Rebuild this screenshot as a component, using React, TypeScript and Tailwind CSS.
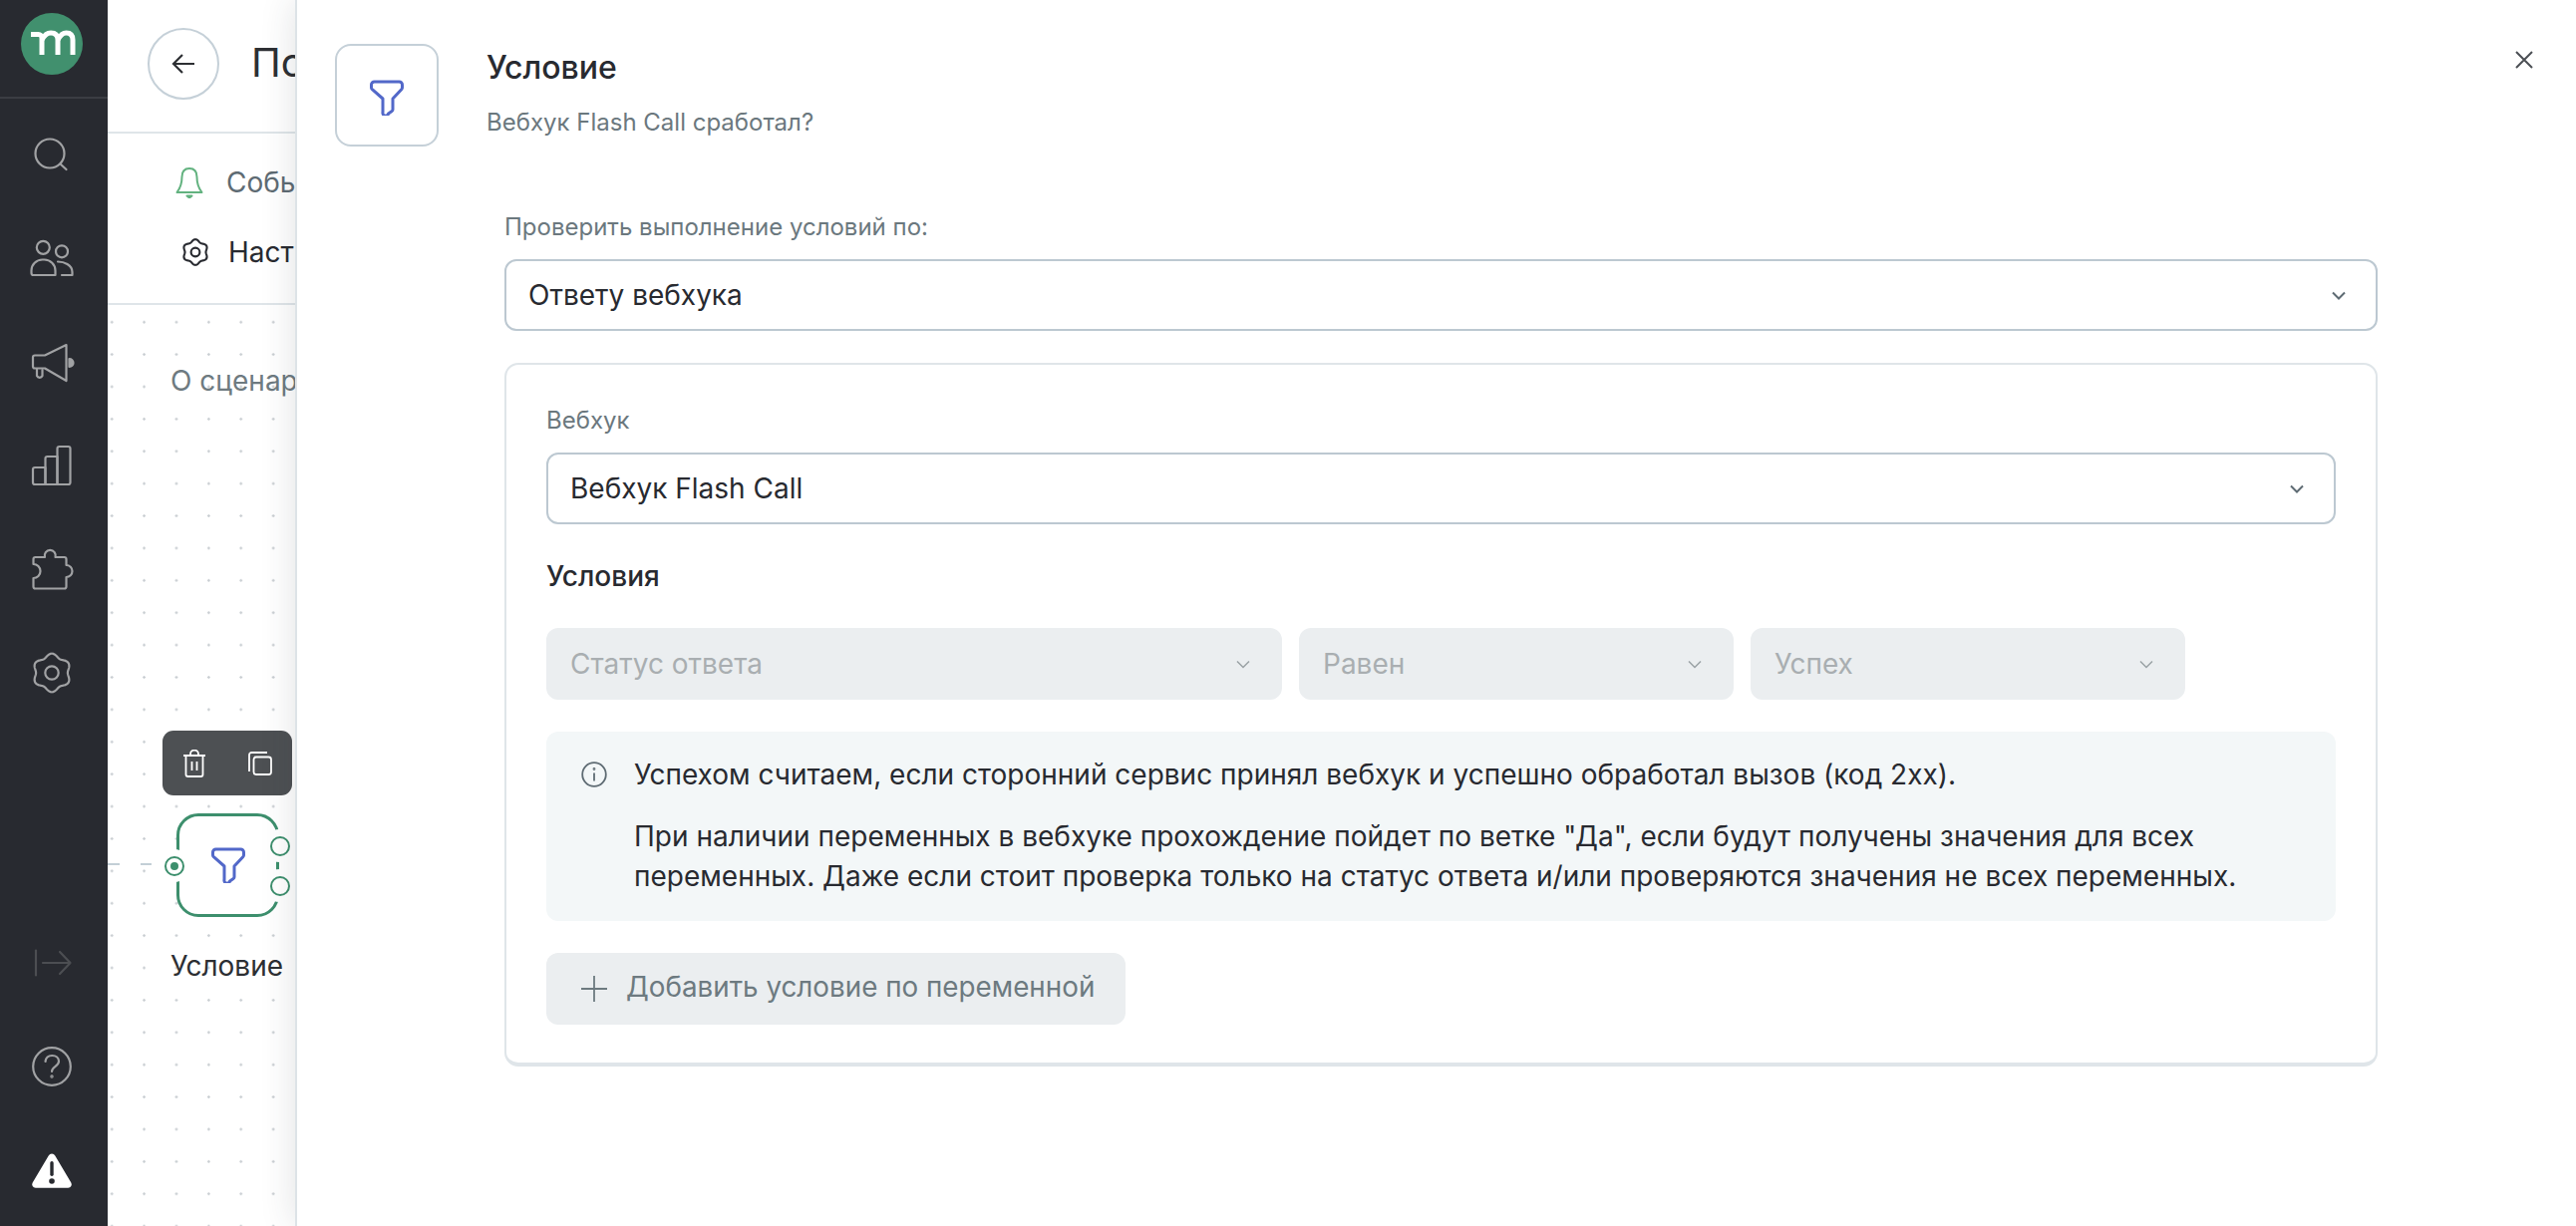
// rounded six-lobed gear outline used by the sidebar and the tab row
function gearPath(cx: number, cy: number, base: number, amp: number) {
  const pts: string[] = [];
  for (let i = 0; i < 180; i++) {
    const t = (i / 180) * Math.PI * 2;
    const r = base + amp * Math.cos(6 * t);
    pts.push(`${(cx + r * Math.sin(t)).toFixed(2)} ${(cy - r * Math.cos(t)).toFixed(2)}`);
  }
  return `M${pts.join('L')}Z`;
}

function FilterIcon({ className = '' }: { className?: string }) {
  return (
    <svg className={className} width="36" height="36" viewBox="0 0 36 36" fill="none" stroke="#5268c9" strokeWidth="3" strokeLinejoin="round">
      <path d="M2.500 5a3 3 0 0 1 3-3h25a3 3 0 0 1 3 3v3a2 2 0 0 1-.6 1.400L24 19v11a2 2 0 0 1-.9 1.600l-3.500 2.400A2 2 0 0 1 14 32.500V19L3.100 9.400A2 2 0 0 1 2.500 8z" />
    </svg>
  );
}

function Chevron({ color = '#5e6b73', thin = false }: { color?: string; thin?: boolean }) {
  return (
    <svg className="shrink-0" width="14" height="9" viewBox="0 0 14 9" fill="none" stroke={color} strokeWidth={thin ? 1.500 : 2}>
      <path d="M1 1.500 7 7.500l6-6" />
    </svg>
  );
}

function NavIcon({ children, stroke = '#a1a2a4' }: { children: React.ReactNode; stroke?: string }) {
  return (
    <div className="flex h-[104px] items-center justify-center">
      <svg width="48" height="48" viewBox="0 0 48 48" fill="none" stroke={stroke} strokeWidth="2.200" strokeLinecap="round" strokeLinejoin="round">
        {children}
      </svg>
    </div>
  );
}

function Sidebar() {
  return (
    <aside className="flex h-full w-[108px] shrink-0 flex-col bg-[#282a30] pr-[4px]">
      <div className="-mr-[4px] flex h-[99px] shrink-0 items-start justify-center border-b-2 border-[#3b3d43] pt-[13px] pr-[4px]">
        <svg width="62" height="62" viewBox="0 0 62 62">
          <circle cx="31" cy="31" r="31" fill="#41906e" />
          <g fill="none" stroke="#fff" strokeWidth="5">
            <path d="M10 21.500h7.500a3.500 3.500 0 0 1 3.500 3.500V42" />
            <path d="M21 27c2-4 5-7 9-7 4.500 0 7 2.500 7 7v15" />
            <path d="M37 27c2-4 5-7 8.500-7 4.500 0 6.500 2.500 6.500 7v15" />
          </g>
        </svg>
      </div>
      <div className="mt-[4px]">
        <NavIcon>
          <circle cx="22" cy="23" r="14.500" />
          <path d="M32.500 33.500 38.500 39" />
        </NavIcon>
        <NavIcon>
          <circle cx="15.300" cy="13.300" r="6.500" />
          <circle cx="34" cy="17.300" r="6" />
          <path d="M3.500 38.500v-2a11 11 0 0 1 11-11h2a11 11 0 0 1 11 11v4.500H5.500a2 2 0 0 1-2-2z" />
          <path d="M30 27.500c6 0 14.500 3 14.500 10.500v3H34" />
        </NavIcon>
        <NavIcon>
          <path d="M38.500 7 17 17.500H7a2 2 0 0 0-2 2v9a2 2 0 0 0 2 2h10L38.500 43z" />
          <path d="M9 31.500V38a3 3 0 0 0 5.500 0v-6" />
          <path d="M41.500 21a4 4 0 0 1 0 8z" fill="#a1a2a4" />
        </NavIcon>
        <NavIcon>
          <path d="M17.500 43H7a2 2 0 0 1-2-2V28a2 2 0 0 1 2-2h10.500z" />
          <path d="M17.500 43V17a2 2 0 0 1 2-2h10v28z" />
          <path d="M29.500 43V7a2 2 0 0 1 2-2h9a2 2 0 0 1 2 2v34a2 2 0 0 1-2 2z" />
        </NavIcon>
        <NavIcon>
          <path d="M7.500 43.500a2 2 0 0 1-2-2V33a7 7 0 0 0 0-14v-5a2 2 0 0 1 2-2H17a5.500 5.500 0 1 1 10.500 0h9a2 2 0 0 1 2 2v6a6 6 0 1 1 0 12v9.500a2 2 0 0 1-2 2z" />
        </NavIcon>
        <NavIcon>
          <path d={gearPath(24, 24, 17.6, 1.7)} />
          <circle cx="24" cy="24" r="6.700" />
        </NavIcon>
      </div>
      <div className="mt-auto pb-[4px]">
        <NavIcon stroke="#4c4e52">
          <path d="M8 11.500v25" />
          <path d="M15 24h27.500M32 13l10.500 11L32 35" />
        </NavIcon>
        <NavIcon>
          <circle cx="24" cy="24" r="18.800" />
          <path d="M17.500 19c.5-4 3.300-6 6.800-6 3.800 0 6.700 2.400 6.700 5.800 0 5-7 5-7 10.200" />
          <circle cx="24" cy="34" r=".6" />
        </NavIcon>
        <div className="flex h-[104px] items-center justify-center">
          <svg width="48" height="48" viewBox="0 0 48 48">
            <path d="M20.700 9.500a3.800 3.800 0 0 1 6.600 0l16 27a3.500 3.500 0 0 1-3 5.300H7.700a3.500 3.500 0 0 1-3-5.300z" fill="#fff" />
            <rect x="22.300" y="15" width="3.400" height="15" rx="1.700" fill="#282a30" />
            <circle cx="24" cy="35" r="2.800" fill="#282a30" />
          </svg>
        </div>
      </div>
    </aside>
  );
}

function Canvas() {
  return (
    <div className="flex h-full w-[188px] shrink-0 flex-col overflow-hidden whitespace-nowrap bg-white">
      {/* шапка сценария */}
      <div className="flex h-[134px] shrink-0 items-start border-b-2 border-[#dfe5e9] pt-[28px] pl-[40px]">
        <button className="flex h-[72px] w-[72px] shrink-0 items-center justify-center rounded-full border-2 border-[#c5d0d8]">
          <svg width="24" height="24" viewBox="0 0 24 24" fill="none" stroke="#2d2f33" strokeWidth="2.200">
            <path d="M23 12H2M11 3l-9 9 9 9" />
          </svg>
        </button>
        <span className="ml-[32px] h-[72px] text-[40px] leading-[70px] text-[#2d2f33]">Подтверждение</span>
      </div>
      {/* вкладки */}
      <div className="flex h-[172px] shrink-0 flex-col border-b-2 border-[#dfe5e9] pt-[28px]">
        <div className="flex h-[42px] items-center pl-[68px]">
          <svg className="shrink-0" width="28" height="32" viewBox="0 0 28 32" fill="none" stroke="#62b27f" strokeWidth="2" strokeLinejoin="round">
            <path d="M14 2c-5 0-7.500 3.500-7.500 8.500 0 7-1.500 11-5 15.500h25c-3.500-4.500-5-8.500-5-15.500C21.500 5.500 19 2 14 2z" />
            <path d="M11.500 29.500h5l-2.500 2z" fill="#62b27f" />
          </svg>
          <span className="ml-[23px] text-[28px] text-[#5e6b73]">События</span>
        </div>
        <div className="mt-[28px] flex h-[42px] items-center pl-[74px]">
          <svg className="shrink-0" width="28" height="28" viewBox="0 0 48 48" fill="none" stroke="#282a30" strokeWidth="3.600" strokeLinejoin="round">
            <path d={gearPath(24, 24, 20, 2)} />
            <circle cx="24" cy="24" r="7.500" />
          </svg>
          <span className="ml-[19px] text-[28px] text-[#282a30]">Настройки</span>
        </div>
      </div>
      {/* холст с точками */}
      <div className="relative flex-1 bg-[radial-gradient(circle,#c9ced2_1px,transparent_1.500px)] bg-[size:32.400px_32.400px] bg-[position:-12px_1px]">
        <div className="absolute left-[63px] top-[56px] text-[28px] leading-[40px] text-[#6e7a80]">О сценарии</div>
        <div className="absolute left-[55px] top-[427px] flex h-[65px] w-[130px] items-center justify-between rounded-[11px] bg-[#4d5053] px-[20px]">
          <svg width="24" height="28" viewBox="0 0 24 28" fill="none" stroke="#fff" strokeWidth="1.800" strokeLinejoin="round">
            <path d="M1 6h22M8 6V4.500a4 4 0 0 1 8 0V6M3.500 6v19a2 2 0 0 0 2 2h13a2 2 0 0 0 2-2V6M9.500 12v9M14.500 12v9" />
          </svg>
          <svg width="24" height="24" viewBox="0 0 24 24" fill="none" stroke="#fff" strokeWidth="1.800" strokeLinejoin="round">
            <path d="M1 20V3.500A2.500 2.500 0 0 1 3.500 1H19" />
            <rect x="5.500" y="5.500" width="17.500" height="17.500" rx="2.500" />
          </svg>
        </div>
        <svg className="absolute left-0 top-[560px]" width="44" height="2">
          <line x1="0" y1="1" x2="44" y2="1" stroke="#c3cfd6" strokeWidth="2" strokeDasharray="12 21" />
        </svg>
        <div className="absolute left-[69px] top-[510px] flex h-[104px] w-[103px] items-center justify-center rounded-[22px] border-[3px] border-[#3d8f6d] bg-white">
          <FilterIcon />
        </div>
        {/* порты узла */}
        <div className="absolute left-[50px] top-[546px] flex h-[33px] w-[33px] items-center justify-center rounded-full bg-white">
          <div className="flex h-[20px] w-[20px] items-center justify-center rounded-full border-2 border-[#3d8f6d]">
            <div className="h-[8px] w-[8px] rounded-full bg-[#3d8f6d]" />
          </div>
        </div>
        <div className="absolute left-[156px] top-[526px] flex h-[33px] w-[33px] items-center justify-center rounded-full bg-white">
          <div className="h-[20px] w-[20px] rounded-full border-2 border-[#3d8f6d]" />
        </div>
        <div className="absolute left-[156px] top-[566px] flex h-[33px] w-[33px] items-center justify-center rounded-full bg-white">
          <div className="h-[20px] w-[20px] rounded-full border-2 border-[#3d8f6d]" />
        </div>
        <div className="absolute left-[63px] top-[643px] text-[28px] leading-[40px] text-[#2d2f33]">Условие</div>
      </div>
    </div>
  );
}

function Select({ label, disabled = false, className = '' }: { label: string; disabled?: boolean; className?: string }) {
  return (
    <div
      className={`flex h-[72px] items-center justify-between rounded-[12px] pr-[30px] pl-[22px] ${
        disabled ? 'border-2 border-[#ebeef0] bg-[#ebeef0] text-[#a9aeb1]' : 'border-2 border-[#bcc8d1] bg-white text-[#282a30]'
      } ${className}`}
    >
      <span className="pb-[1px] text-[28px]">{label}</span>
      {disabled ? <Chevron color="#9aa1a5" thin /> : <Chevron />}
    </div>
  );
}

function Panel() {
  return (
    <section className="relative z-10 flex h-full flex-1 flex-col border-l-2 border-[#dde3e7] bg-white shadow-[0_0_34px_rgba(40,50,60,0.14)]">
      <header className="flex items-start pt-[44px] pl-[38px]">
        <div className="flex h-[103px] w-[104px] shrink-0 items-center justify-center rounded-[16px] border-2 border-[#c5d0d8]">
          <FilterIcon className="mt-[4px]" />
        </div>
        <div className="ml-[48px] flex flex-col">
          <h2 className="mt-[2px] h-[44px] text-[32px] leading-[44px] font-medium text-[#282a30]">Условие</h2>
          <p className="mt-[17px] h-[32px] text-[24px] leading-[32px] text-[#6b787e]">Вебхук Flash Call сработал?</p>
        </div>
        <svg className="mt-[7px] mr-[43px] ml-auto" width="18" height="18" viewBox="0 0 18 18" fill="none" stroke="#4b4f54" strokeWidth="2">
          <path d="M1 1l16 16M17 1 1 17" />
        </svg>
      </header>
      <div className="mt-[65px] ml-[208px] w-[1879px]">
        <div className="mb-[16px] h-[32px] text-[24px] leading-[32px] text-[#6b787e]">Проверить выполнение условий по:</div>
        <Select label="Ответу вебхука" />
        <div className="mt-[32px] h-[706px] rounded-[14px] border-2 border-b-4 border-[#dfe5e9] px-[40px] pt-[40px]">
          <div className="mb-[16px] h-[32px] text-[24px] leading-[32px] text-[#6b787e]">Вебхук</div>
          <Select label="Вебхук Flash Call" />
          <h3 className="mt-[32px] h-[40px] text-[28px] leading-[40px] font-medium text-[#282a30]">Условия</h3>
          <div className="mt-[32px] flex gap-[17px]">
            <Select label="Статус ответа" disabled className="w-[738px]" />
            <Select label="Равен" disabled className="w-[436px]" />
            <Select label="Успех" disabled className="w-[436px]" />
          </div>
          <div className="mt-[32px] flex h-[190px] rounded-[12px] bg-[#f3f7f8] pt-[23px] pl-[35px]">
            <svg className="mt-[7px] shrink-0" width="26" height="26" viewBox="0 0 26 26" fill="none" stroke="#5e6b73" strokeWidth="1.800">
              <circle cx="13" cy="13" r="11.800" />
              <path d="M13 11.500v8" />
              <circle cx="13" cy="7.500" r=".5" />
            </svg>
            <div className="ml-[27px] text-[28px] leading-[40px] text-[#282a30]">
              <p>Успехом считаем, если сторонний сервис принял вебхук и успешно обработал вызов (код 2xx).</p>
              <p className="mt-[22px]">
                При наличии переменных в вебхуке прохождение пойдет по ветке "Да", если будут получены значения для всех
                <br />
                переменных. Даже если стоит проверка только на статус ответа и/или проверяются значения не всех переменных.
              </p>
            </div>
          </div>
          <button className="mt-[32px] flex h-[72px] w-[581px] items-center rounded-[12px] bg-[#ebeef0] pl-[35px] text-[27.800px] text-[#6d7a80]">
            <svg className="shrink-0" width="26" height="26" viewBox="0 0 26 26" fill="none" stroke="#6d7a80" strokeWidth="1.800">
              <path d="M13 0v26M0 13h26" />
            </svg>
            <span className="ml-[19px] pb-[2px]">Добавить условие по переменной</span>
          </button>
        </div>
      </div>
    </section>
  );
}

export default function App() {
  return (
    <div className="flex h-[1230px] w-[2584px] overflow-hidden bg-white [font-family:Inter,'Noto_Sans',sans-serif]">
      <Sidebar />
      <Canvas />
      <Panel />
    </div>
  );
}
